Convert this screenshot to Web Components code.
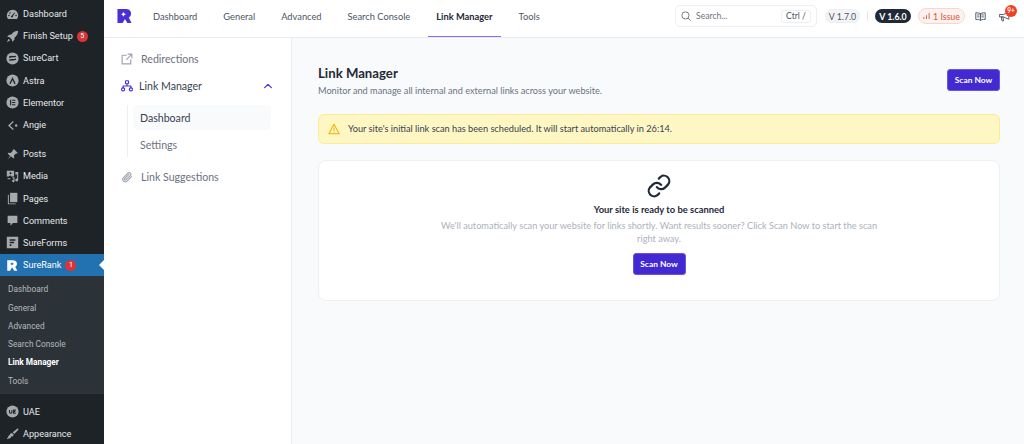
<!DOCTYPE html>
<html lang="en">
<head>
<meta charset="utf-8">
<title>Link Manager</title>
<style>
  html, body { margin: 0; height: 100%; }
  body { width: 1024px; height: 444px; overflow: hidden; display: flex; font-family: Lato, sans-serif; background: #f9fafb; }
</style>
</head>
<body>
<wp-sidebar></wp-sidebar>
<sr-app></sr-app>

<script>
const ICONS = {
  dashboard: '<path d="M8 2.2a7 7 0 0 0-7 7c0 1.7.6 3.2 1.6 4.4h10.8A7 7 0 0 0 8 2.2z"/><path fill="#1d2327" d="M7 9.4l3.4-4 .7.5-2.6 4.4a1.2 1.2 0 1 1-1.5-.9z"/><circle cx="3.6" cy="9.2" r=".9" fill="#1d2327"/><circle cx="5" cy="6" r=".9" fill="#1d2327"/><circle cx="12.4" cy="9.2" r=".9" fill="#1d2327"/>',
  rocket: '<path d="M15 1c-3.6.2-6.3 1.6-8.3 4.4L4 5.7 1.4 8.4l3 .5 2.7 2.7.5 3L10.3 12l.3-2.7C13.4 7.3 14.8 4.6 15 1z"/><path d="M3.3 10.8 1 15l4.2-2.3z"/>',
  surecart: '<circle cx="8" cy="8" r="7.5"/><path fill="none" stroke="#1d2327" stroke-width="1.8" stroke-linecap="round" d="M4.5 6.3c2-1.3 4.5-.1 7-.9M4.5 9.9c2-1 4.5.2 7-.9"/>',
  astra: '<circle cx="8" cy="8" r="7.5"/><path fill="#1d2327" d="M8 3.8 12 12h-1.9L8 7.5 5.8 12H4z"/>',
  elementor: '<circle cx="8" cy="8" r="7.5"/><path fill="#1d2327" d="M5 4.5h1.4v7H5zM7.6 4.5h3.9v1.4H7.6zM7.6 7.3h3.9v1.4H7.6zM7.6 10.1h3.9v1.4H7.6z"/>',
  angie: '<path d="M8.5 2.5 2.5 8l6 5.5 1-1.2L5 8l4.5-4.3z"/><circle cx="12.5" cy="8" r="1.5"/>',
  posts: '<path d="M10 1.500 14.500 6l-1 1-1-.4-2.700 2.700.3 2.700-1 1-3-3L2 14l3-4.100-3-3 1-1 2.700.3L8.400 3.500 8 2.500z"/>',
  media: '<path d="M1 1h9v7H6.5L5 6.500 3.500 8H1z"/><circle cx="5.500" cy="4" r="1.300" fill="#1d2327"/><path d="M2 10h3.500v1.500H2zM11.500 2.500H15v9.800a1.800 1.800 0 1 1-1.300-1.700V5.500h-2.200zM8 9h2.500v4.500a1.500 1.500 0 1 1-1.200-1.500V10.500H8z"/>',
  pages: '<path d="M5 1h9v11.500H5z"/><path d="M3.500 3.500V14H12v1.200H2.300V3.500z"/>',
  comments: '<path d="M2 2h12v9H8.500L5.500 14.500V11H2z"/>',
  sureforms: '<path fill-rule="evenodd" d="M1 1h14v14H1zM4.500 4v1.900h7V4zM4.500 7.100v1.900h5.500V7.100zM4.500 10.200v2.100h2.100v-2.100z"/>',
  surerank: '<path d="M1.500 1.500h6.800c3.200 0 5.200 1.700 5.200 4.300 0 1.700-.8 3-2.200 3.700l2.700 5H10l-2.500-4.500-2.500 4.500H1.500zM5 6c1.300.2 2 1 2.300 2.200C7.900 7 8.500 6.200 9.800 6 8.500 5.800 7.900 5 7.300 3.800 7 5 6.300 5.800 5 6z" fill-rule="evenodd"/>',
  uae: '<circle cx="8" cy="8" r="7.500"/><path fill="none" stroke="#1d2327" stroke-width="1.300" d="M4.300 6v2.700a1.500 1.500 0 0 0 3 0V6M12 6.300H9.300v3.700H12M9.300 8.100H11.500"/>',
  appearance: '<path d="M14.500 1.500 15.500 3l-5.300 5.500-1.900-1.900zM7.500 7.500l2 2-1.500 2.500L7 11l-1.500 2.500L1 15l2.500-4.500L5 9.500l-.5-.8z"/>'
};

const sidebarTpl = document.createElement('template');
sidebarTpl.innerHTML = `
  <style>
    :host { display: block; flex: 0 0 104px; width: 104px; height: 444px; overflow: hidden; background: #1d2327; font: 9.1px/22px Roboto, sans-serif; }
    .wrap { padding-top: 3px; }
    .sep { height: 7px; }
    .sub { background: #2c3338; padding: 4px 0; margin-bottom: 6.6px; }
  </style>
  <div class="wrap">
    <wp-item icon="dashboard">Dashboard</wp-item>
    <wp-item icon="rocket" badge="5">Finish Setup</wp-item>
    <wp-item icon="surecart">SureCart</wp-item>
    <wp-item icon="astra">Astra</wp-item>
    <wp-item icon="elementor">Elementor</wp-item>
    <wp-item icon="angie">Angie</wp-item>
    <div class="sep"></div>
    <wp-item icon="posts">Posts</wp-item>
    <wp-item icon="media">Media</wp-item>
    <wp-item icon="pages">Pages</wp-item>
    <wp-item icon="comments">Comments</wp-item>
    <wp-item icon="sureforms">SureForms</wp-item>
    <wp-item icon="surerank" badge="1" current>SureRank</wp-item>
    <div class="sub">
      <wp-subitem>Dashboard</wp-subitem>
      <wp-subitem>General</wp-subitem>
      <wp-subitem>Advanced</wp-subitem>
      <wp-subitem>Search Console</wp-subitem>
      <wp-subitem active>Link Manager</wp-subitem>
      <wp-subitem>Tools</wp-subitem>
    </div>
    <wp-item icon="uae">UAE</wp-item>
    <wp-item icon="appearance">Appearance</wp-item>
  </div>`;

class WpSidebar extends HTMLElement {
  constructor() {
    super();
    this.attachShadow({ mode: 'open' }).appendChild(sidebarTpl.content.cloneNode(true));
  }
}

class WpItem extends HTMLElement {
  constructor() {
    super();
    const icon = ICONS[this.getAttribute('icon')] || '';
    const badge = this.getAttribute('badge');
    this.attachShadow({ mode: 'open' }).innerHTML = `
      <style>
        :host { display: flex; align-items: center; position: relative; height: 22.2px; color: #e6e8ea; padding-left: 5.5px; white-space: nowrap; }
        :host([current]) { background: #2271b1; color: #fff; }
        :host([current])::after { content: ""; position: absolute; right: 0; top: 6px; border: 5px solid transparent; border-right-color: #fff; border-left: 0; }
        svg { width: 13px; height: 13px; fill: #a7aaad; flex: none; margin-right: 4.5px; }
        :host([current]) svg { fill: #fff; }
        .badge { margin-left: 4px; width: 11px; height: 11px; border-radius: 50%; background: #d63638; color: #fff; font-size: 7px; line-height: 11px; text-align: center; }
      </style>
      <svg viewBox="0 0 16 16">${icon}</svg><slot></slot>${badge ? `<span class="badge">${badge}</span>` : ''}`;
  }
}

class WpSubitem extends HTMLElement {
  constructor() {
    super();
    this.attachShadow({ mode: 'open' }).innerHTML = `
      <style>
        :host { display: block; height: 18.3px; line-height: 18px; padding-left: 8px; font-size: 8.3px; color: #b4b9be; white-space: nowrap; }
        :host([active]) { color: #fff; font-weight: 700; }
      </style><slot></slot>`;
  }
}

class SrApp extends HTMLElement {
  constructor() {
    super();
    this.attachShadow({ mode: 'open' }).innerHTML = `
      <style>
        :host { flex: 1; display: flex; flex-direction: column; min-width: 0; height: 444px; }
        .body { flex: 1; display: flex; min-height: 0; }
      </style>
      <sr-topbar></sr-topbar>
      <div class="body"><sr-sidenav></sr-sidenav><sr-main></sr-main></div>`;
  }
}

class SrTopbar extends HTMLElement {
  constructor() {
    super();
    this.attachShadow({ mode: 'open' }).innerHTML = `
      <style>
        :host { display: flex; align-items: center; flex: 0 0 38px; box-sizing: border-box; height: 38px; background: #fff; border-bottom: 1px solid #e9ebef; font: 9.3px Lato, sans-serif; color: #4b5563; }
        .logo { width: 15px; height: 16px; margin: -5px 0 0 13px; fill: #4b2fd6; flex: none; }
        nav { display: flex; height: 37px; margin-left: 8px; }
        nav a { display: flex; align-items: center; padding: 0 13px 4px; position: relative; white-space: nowrap; }
        nav a.on { color: #1f2937; font-weight: 700; }
        nav a.on::after { content: ""; position: absolute; left: 5px; right: 5px; bottom: 0; height: 1px; background: #8b6cf0; }
        .right { margin-left: auto; display: flex; align-items: center; padding-right: 14px; margin-top: -5px; }
        .search { box-sizing: border-box; width: 142px; height: 22px; border: 1px solid #eceef1; border-radius: 5px; display: flex; align-items: center; padding: 0 5px; color: #6b7280; font-size: 8.6px; }
        .search svg { width: 10px; height: 10px; fill: none; stroke: #6b7280; stroke-width: 1.1; margin-right: 5px; flex: none; }
        .kbd { box-sizing: border-box; margin-left: auto; width: 30px; height: 13px; line-height: 11px; text-align: center; border: 1px solid #eceef1; border-radius: 3px; color: #4b5563; font-size: 8.6px; }
        .pill { box-sizing: border-box; display: flex; align-items: center; justify-content: center; border-radius: 8px; white-space: nowrap; font-size: 8.8px; }
        .v17 { margin-left: 8px; width: 35px; height: 14px; background: #f3f4f6; border: 1px solid #eceef1; color: #4b5563; }
        .rule { width: 1px; height: 10px; background: #e5e7eb; margin: 0 7px; }
        .v16 { width: 36px; height: 14px; background: #1f2937; color: #fff; font-weight: 700; }
        .issue { margin-left: 7px; width: 47px; height: 16px; gap: 3px; background: #fef2f0; border: 1px solid #fad5cc; color: #d4552f; }
        .ic { width: 11px; height: 11px; fill: none; stroke: #4b5563; stroke-width: 1.2; stroke-linecap: round; stroke-linejoin: round; flex: none; }
        .bell { position: relative; margin-left: 13px; display: flex; }
        .bell b { position: absolute; left: 6px; top: -6px; width: 12px; height: 12px; border-radius: 50%; background: #ef4123; color: #fff; font: 700 6.5px/12px Lato, sans-serif; text-align: center; }
      </style>
      <svg class="logo" viewBox="0 0 16 16" preserveAspectRatio="none"><path fill-rule="evenodd" d="M.5 1h9c3.4 0 5.5 1.900 5.500 4.600 0 1.800-.9 3.200-2.400 4l2.900 5.400h-4.500L8.500 11 6 15H.5zM4 6.200c1.500.2 2.400 1.100 2.800 2.500.6-1.300 1.500-2.300 3.300-2.500C8.400 6 7.300 5 6.800 3.700 6.400 5 5.500 6 4 6.200z"/></svg>
      <nav>
        <a>Dashboard</a><a>General</a><a>Advanced</a><a>Search Console</a><a class="on">Link Manager</a><a>Tools</a>
      </nav>
      <div class="right">
        <div class="search">
          <svg viewBox="0 0 12 12"><circle cx="5.3" cy="5.3" r="4.3"/><path d="M8.4 8.4 11.5 11.5"/></svg>
          <span>Search...</span><span class="kbd">Ctrl /</span>
        </div>
        <span class="pill v17">V 1.7.0</span>
        <span class="rule"></span>
        <span class="pill v16">V 1.6.0</span>
        <span class="pill issue"><svg width="7" height="8" viewBox="0 0 8 8" fill="none" stroke="#d4552f" stroke-linecap="round"><path d="M1 7V5.5M4 7V3.5M7 7V1"/></svg>1 Issue</span>
        <svg class="ic" style="margin-left:10px" viewBox="0 0 14 14"><path d="M7 3.5C6 2.600 4.500 2.300 1 2.300v8.400c3.500 0 5 .3 6 1.200 1-.9 2.500-1.200 6-1.200V2.300c-3.500 0-5 .3-6 1.200zM7 3.500v8.400M3.300 5h2M3.300 7.500h2M8.700 5h2M8.700 7.500h2"/></svg>
        <span class="bell"><svg class="ic" viewBox="0 0 14 14"><path d="M1 4.500h4.500l7-3v9l-7-3H1zM3 7.500l.8 5h2L5 7.500"/></svg><b>9+</b></span>
      </div>`;
  }
}

class SrSidenav extends HTMLElement {
  constructor() {
    super();
    this.attachShadow({ mode: 'open' }).innerHTML = `
      <style>
        :host { flex: 0 0 188px; box-sizing: border-box; background: #fff; border-right: 1px solid #eceef1; padding: 10.4px 20px 0 17px; font: 10.6px Lato, sans-serif; color: #6b7280; }
        .row { display: flex; align-items: center; height: 22px; margin-bottom: 5px; gap: 8px; }
        .row svg { width: 12px; height: 12px; fill: none; stroke: #9ca3af; stroke-width: 1.5; stroke-linecap: round; stroke-linejoin: round; flex: none; }
        .row.open { color: #374151; gap: 6px; margin-bottom: 8px; }
        .row.open svg { stroke: #4b2fd6; }
        .row .chev { margin: 0 -2px 0 auto; width: 10px; height: 10px; }
        .subs { margin: 0 0 9px 6px; padding-left: 5px; border-left: 1px solid #eceef1; }
        .subs a { display: flex; align-items: center; height: 25px; padding-left: 7px; border-radius: 5px; }
        .subs a + a { margin-top: 2px; }
        .subs a.on { background: #f9fafb; color: #374151; }
      </style>
      <div class="row"><svg viewBox="0 0 16 16"><path d="M13 9v5.500H1.500V3H7M9.500 1.500h5v5M14.500 1.500 7.500 8.500"/></svg><span>Redirections</span></div>
      <div class="row open"><svg viewBox="0 0 16 16"><rect x="6" y="1" width="4" height="4" rx=".8"/><rect x=".8" y="10.5" width="4" height="4" rx="1.5"/><rect x="11.2" y="10.5" width="4" height="4" rx="1.5"/><path d="M8 5v3M2.800 10.500V8h10.400v2.500"/></svg><span>Link Manager</span><svg class="chev" viewBox="0 0 12 12"><path d="M2 8l4-4 4 4"/></svg></div>
      <div class="subs"><a class="on">Dashboard</a><a>Settings</a></div>
      <div class="row"><svg viewBox="0 0 16 16"><path d="M14 7.500 8 13.500a3.300 3.300 0 0 1-4.700-4.700l6.200-6.200a2.200 2.200 0 0 1 3.100 3.100L6.500 11.800a1.100 1.100 0 0 1-1.600-1.600L10.500 4.600"/></svg><span>Link Suggestions</span></div>`;
  }
}

class SrButton extends HTMLElement {
  constructor() {
    super();
    this.attachShadow({ mode: 'open' }).innerHTML = `
      <style>
        :host { display: inline-flex; align-items: center; justify-content: center; box-sizing: border-box; width: 53px; height: 22px; background: #4329d1; border-radius: 3px; border: 1px solid #6a55e0; color: #fff; font: 700 8.4px Lato, sans-serif; white-space: nowrap; }
      </style><slot></slot>`;
  }
}

class SrMain extends HTMLElement {
  constructor() {
    super();
    this.attachShadow({ mode: 'open' }).innerHTML = `
      <style>
        :host { flex: 1; box-sizing: border-box; padding: 26.6px 24px 0 26px; background: #f9fafb; min-width: 0; font-family: Lato, sans-serif; }
        .head { display: flex; justify-content: space-between; align-items: flex-start; margin-bottom: 15.4px; }
        h1 { margin: 0 0 2px; font-size: 13.2px; line-height: 16px; font-weight: 700; color: #1f2937; }
        p { margin: 0; font-size: 9.2px; line-height: 16px; color: #6b7280; }
        sr-button { margin-top: 4px; }
        .alert { box-sizing: border-box; display: flex; align-items: center; gap: 8px; height: 30px; padding: 0 9px; background: #fef7c3; border: 1px solid #fdec93; border-radius: 6px; font-size: 9.2px; color: #374151; margin-bottom: 16px; }
        .alert svg { width: 12px; height: 12px; fill: none; stroke: #eab308; stroke-width: 1.2; stroke-linejoin: round; stroke-linecap: round; flex: none; }
        .card { box-sizing: border-box; height: 141px; background: #fff; border: 1px solid #eef0f3; border-radius: 8px; display: flex; flex-direction: column; align-items: center; padding: 12px 0 0; text-align: center; }
        .card svg { width: 26px; height: 26px; fill: none; stroke: #1f2937; stroke-width: 2; stroke-linecap: round; stroke-linejoin: round; }
        h2 { margin: 4px 0 2px; font-size: 9.4px; line-height: 14px; font-weight: 700; color: #1f2937; }
        .card p { width: 450px; line-height: 13.5px; color: #adb2bc; margin-bottom: 3px; }
      </style>
      <div class="head">
        <div><h1>Link Manager</h1><p>Monitor and manage all internal and external links across your website.</p></div>
        <sr-button>Scan Now</sr-button>
      </div>
      <div class="alert">
        <svg viewBox="0 0 14 14"><path d="M7 1.500 13 12.500H1zM7 5.500v3.500M7 10.700v.1"/></svg>
        <span>Your site's initial link scan has been scheduled. It will start automatically in 26:14.</span>
      </div>
      <div class="card">
        <svg viewBox="0 0 24 24"><path d="M10 13a5 5 0 0 0 7.500.5l3-3a5 5 0 0 0-7-7l-1.700 1.700"/><path d="M14 11a5 5 0 0 0-7.500-.5l-3 3a5 5 0 0 0 7 7l1.700-1.700"/></svg>
        <h2>Your site is ready to be scanned</h2>
        <p>We'll automatically scan your website for links shortly. Want results sooner? Click Scan Now to start the scan right away.</p>
        <sr-button>Scan Now</sr-button>
      </div>`;
  }
}

customElements.define('wp-item', WpItem);
customElements.define('wp-subitem', WpSubitem);
customElements.define('wp-sidebar', WpSidebar);
customElements.define('sr-topbar', SrTopbar);
customElements.define('sr-sidenav', SrSidenav);
customElements.define('sr-button', SrButton);
customElements.define('sr-main', SrMain);
customElements.define('sr-app', SrApp);
</script>
</body>
</html>
